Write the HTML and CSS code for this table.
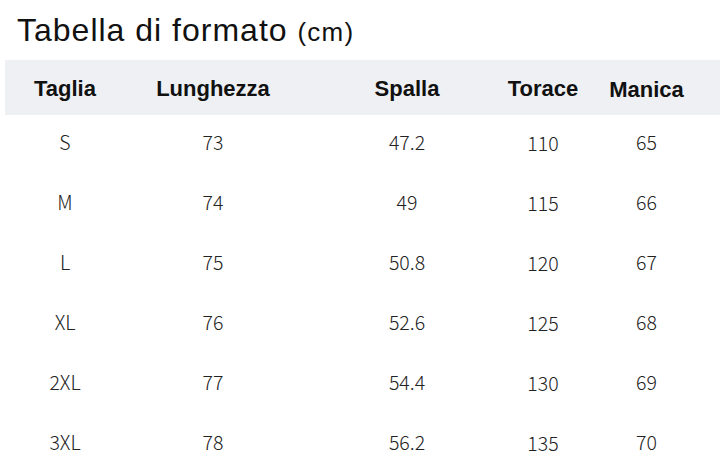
FILE: index.html
```html
<!DOCTYPE html>
<html lang="it">
<head>
<meta charset="utf-8">
<title>Tabella di formato</title>
<link rel="stylesheet" href="styles.css">
</head>
<body>
<div class="page">
  <h1 class="title">Tabella di formato <span class="unit">(cm)</span></h1>
  <div class="table">
    <div class="row head">
      <div class="cell">Taglia</div>
      <div class="cell">Lunghezza</div>
      <div class="cell">Spalla</div>
      <div class="cell">Torace</div>
      <div class="cell c5">Manica</div>
    </div>
    <div class="row">
      <div class="cell">S</div><div class="cell">73</div><div class="cell">47.2</div><div class="cell c4">110</div><div class="cell">65</div>
    </div>
    <div class="row">
      <div class="cell">M</div><div class="cell">74</div><div class="cell">49</div><div class="cell c4">115</div><div class="cell">66</div>
    </div>
    <div class="row">
      <div class="cell">L</div><div class="cell">75</div><div class="cell">50.8</div><div class="cell c4">120</div><div class="cell">67</div>
    </div>
    <div class="row">
      <div class="cell">XL</div><div class="cell">76</div><div class="cell">52.6</div><div class="cell c4">125</div><div class="cell">68</div>
    </div>
    <div class="row">
      <div class="cell">2XL</div><div class="cell">77</div><div class="cell">54.4</div><div class="cell c4">130</div><div class="cell">69</div>
    </div>
    <div class="row">
      <div class="cell">3XL</div><div class="cell">78</div><div class="cell">56.2</div><div class="cell c4">135</div><div class="cell">70</div>
    </div>
  </div>
</div>
</body>
</html>
```

FILE: styles.css
```css
* { box-sizing: border-box; }
html, body { margin: 0; padding: 0; background: #ffffff; }
.page {
  width: 724px;
  height: 469px;
  overflow: hidden;
  padding: 10px 0 0 5px;
}
.title {
  margin: 0 0 8px 12px;
  font-family: "Liberation Sans", Arial, sans-serif;
  font-weight: 400;
  font-size: 32px;
  line-height: 40px;
  letter-spacing: 1px;
  color: #111111;
}
.unit {
  font-size: 26px;
  letter-spacing: 1.2px;
}
.table {
  width: 715px;
}
.row {
  display: grid;
  grid-template-columns: 120px 176px 212px 60px 147px;
  height: 60px;
  padding-bottom: 6px;
  align-items: center;
  font-family: "Noto Sans CJK SC", "Noto Sans", sans-serif;
  font-weight: 300;
  font-size: 19.5px;
  line-height: 24px;
  color: #222222;
}
.row.head {
  height: 55px;
  padding-bottom: 0;
  padding-top: 2px;
  background: #eef0f3;
  font-family: "Liberation Sans", Arial, sans-serif;
  font-weight: 700;
  font-size: 22px;
  line-height: 26px;
  color: #111111;
}
.cell {
  display: flex;
  justify-content: center;
  white-space: nowrap;
}
.c4 { padding-top: 2px; }
.c5 { padding-top: 3px; }
```
